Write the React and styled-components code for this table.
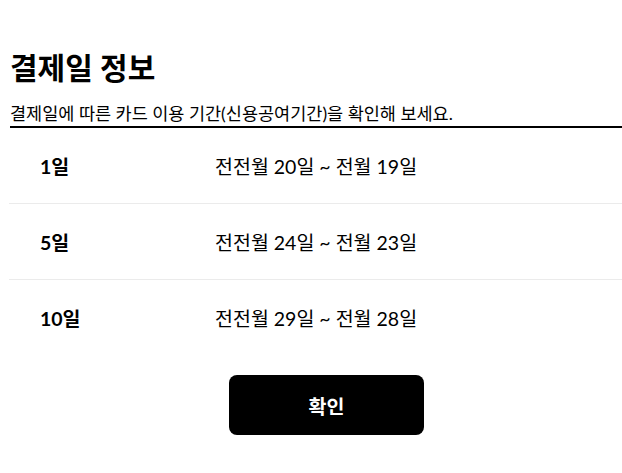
import React from "react";
import styled, { createGlobalStyle } from "styled-components";

const Global = createGlobalStyle`
  html, body { margin: 0; padding: 0; background: #fff; overflow: hidden; }
  body { font-family: Lato, "Noto Sans CJK KR", sans-serif; color: #000; }
`;

const Page = styled.div`
  width: 633px;
  padding: 0 0 0 10px;
  display: flex;
  flex-direction: column;
`;

const Title = styled.h1`
  margin: 47px 0 0;
  font-size: 30px;
  font-weight: 700;
  line-height: 40px;
`;

const Sub = styled.p`
  margin: 16px 0 0;
  font-size: 17.5px;
  line-height: 22px;
  padding-bottom: 1px;
  border-bottom: 2px solid #000;
`;

const List = styled.div`
  display: flex;
  flex-direction: column;
  margin-left: -1px;
`;

const Row = styled.div`
  display: flex;
  align-items: center;
  height: 75px;
  border-top: ${(p) => (p.$first ? "none" : "1px solid #ebebeb")};
`;

const Day = styled.div`
  width: 175px;
  padding-left: 31px;
  font-size: 19.5px;
  font-weight: 700;
`;

const Period = styled.div`
  font-size: 19.5px;
  font-weight: 400;
`;

const Button = styled.button`
  align-self: center;
  margin-top: 20px;
  width: 195px;
  height: 60px;
  border: none;
  border-radius: 8px;
  background: #000;
  color: #fff;
  font-family: Lato, "Noto Sans CJK KR", sans-serif;
  font-size: 19.5px;
  font-weight: 700;
  cursor: pointer;
`;

const rows = [
  ["1일", "전전월 20일 ~ 전월 19일"],
  ["5일", "전전월 24일 ~ 전월 23일"],
  ["10일", "전전월 29일 ~ 전월 28일"],
];

export default function App() {
  return (
    <>
      <Global />
      <Page>
        <Title>결제일 정보</Title>
        <Sub>결제일에 따른 카드 이용 기간(신용공여기간)을 확인해 보세요.</Sub>
        <List>
          {rows.map(([d, p], i) => (
            <Row key={d} $first={i === 0}>
              <Day>{d}</Day>
              <Period>{p}</Period>
            </Row>
          ))}
        </List>
        <Button>확인</Button>
      </Page>
    </>
  );
}
